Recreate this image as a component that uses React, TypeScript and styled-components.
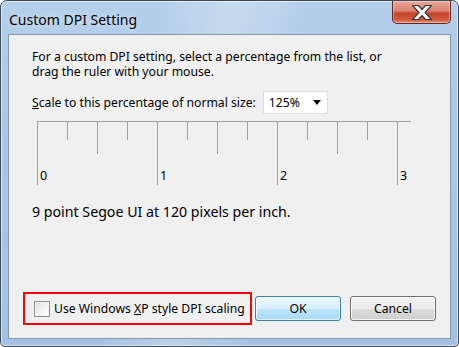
import styled, { createGlobalStyle } from 'styled-components';

const Global = createGlobalStyle`
  html, body {
    margin: 0;
    padding: 0;
    background: #ffffff;
  }
  body {
    font-family: "Noto Sans", "Open Sans", sans-serif;
  }
`;

const ticks = Array.from({ length: 13 }, (_, i) => i);

const Ruler = () => {
  return (
    <Styled.RulerSvg width="376" height="66" viewBox="0 0 376 66">
      <line x1="0" y1="1.5" x2="374" y2="1.5" stroke="#a0a0a0" strokeWidth="1" />
      {ticks.map((i) => {
        const x = i * 30 + 0.5;
        const len = i % 4 === 0 ? 64 : i % 2 === 0 ? 33 : 19;
        return <line key={i} x1={x} y1="1" x2={x} y2={1 + len} stroke="#a0a0a0" strokeWidth="1" />;
      })}
      {[0, 1, 2, 3].map((n) => (
        <text key={n} x={n * 120 + 3} y="60" fontSize="12.5" fill="#000" fontFamily='"Noto Sans", sans-serif'>
          {n}
        </text>
      ))}
    </Styled.RulerSvg>
  );
};

const App = () => {
  return (
    <>
      <Global />
      <Styled.Window>
        <Styled.TitleBar>
          <Styled.Title>Custom DPI Setting</Styled.Title>
          <Styled.CloseButton>
            <svg width="24" height="17" viewBox="0 0 24 17">
              <path
                d="M2.5 1.5 L8.5 1.5 L12 5.5 L15.5 1.5 L21.5 1.5 L15 8.5 L21.5 15.5 L15.5 15.5 L12 11.5 L8.5 15.5 L2.5 15.5 L9 8.5 Z"
                fill="#ffffff"
                stroke="#3a3a3a"
                strokeWidth="1.2"
                strokeLinejoin="round"
              />
            </svg>
          </Styled.CloseButton>
        </Styled.TitleBar>
        <Styled.Client>
          <Styled.Intro>
            For a custom DPI setting, select a percentage from the list, or
            <br />
            drag the ruler with your mouse.
          </Styled.Intro>
          <Styled.ScaleRow>
            <span>
              <u>S</u>cale to this percentage of normal size:
            </span>
            <Styled.Combo>
              125%
              <Styled.Arrow />
            </Styled.Combo>
          </Styled.ScaleRow>
          <Ruler />
          <Styled.Info>9 point Segoe UI at 120 pixels per inch.</Styled.Info>
          <Styled.Footer>
            <Styled.Highlight>
              <Styled.Checkbox />
              <span>
                Use Windows <u>X</u>P style DPI scaling
              </span>
            </Styled.Highlight>
            <Styled.Button $primary>OK</Styled.Button>
            <Styled.Button>Cancel</Styled.Button>
          </Styled.Footer>
        </Styled.Client>
      </Styled.Window>
    </>
  );
};

export default App;

const Styled = {
  Window: styled.div`
    box-sizing: border-box;
    width: 459px;
    height: 347px;
    border: 1px solid #3e4a55;
    border-radius: 7px 7px 5px 5px;
    padding: 0 7px 7px 7px;
    display: flex;
    flex-direction: column;
    background:
      linear-gradient(100deg, rgba(255,255,255,0) 30%, rgba(255,255,255,0.25) 45%, rgba(255,255,255,0) 60%),
      linear-gradient(180deg, #b4cfea 0%, #a9c7e6 40%, #a3c2e3 100%);
    box-shadow: inset 0 0 0 1px rgba(255, 255, 255, 0.55);
  `,
  TitleBar: styled.div`
    height: 33px;
    display: flex;
    justify-content: space-between;
    align-items: flex-start;
  `,
  Title: styled.div`
    font-family: "Noto Sans", sans-serif;
    font-size: 14px;
    color: #000;
    padding: 9px 0 0 1px;
    line-height: 20px;
    text-shadow: 0 0 8px rgba(255, 255, 255, 0.9);
  `,
  CloseButton: styled.div`
    box-sizing: border-box;
    width: 59px;
    height: 23px;
    border: 1px solid #5d2a22;
    border-top: none;
    border-radius: 0 0 5px 5px;
    display: flex;
    align-items: center;
    justify-content: center;
    background: linear-gradient(180deg, #e9a99c 0%, #d9816f 45%, #c7452d 55%, #cf5a3f 85%, #e08c70 100%);
    box-shadow: inset 0 0 0 1px rgba(255, 255, 255, 0.35);
  `,
  Client: styled.div`
    flex: 1;
    box-sizing: border-box;
    border: 1px solid #8396aa;
    background: #f0f0f0;
    padding: 14px 0 0 23px;
    display: flex;
    flex-direction: column;
    font-size: 12.2px;
    color: #000;
  `,
  Intro: styled.p`
    margin: 0;
    line-height: 15px;
  `,
  ScaleRow: styled.div`
    margin-top: 12px;
    display: flex;
    align-items: center;
    gap: 7px;
    line-height: 15px;
  `,
  Combo: styled.div`
    box-sizing: border-box;
    width: 65px;
    height: 23px;
    border: 1px solid #dcdcdc;
    background: #fff;
    padding-left: 5px;
    display: flex;
    align-items: center;
    justify-content: space-between;
    padding-right: 6px;
  `,
  Arrow: styled.span`
    width: 0;
    height: 0;
    border-left: 4px solid transparent;
    border-right: 4px solid transparent;
    border-top: 5px solid #000;
  `,
  RulerSvg: styled.svg`
    display: block;
    margin: 6px 0 0 5px;
    overflow: visible;
  `,
  Info: styled.p`
    margin: 17px 0 0 0;
    font-size: 14.2px;
    line-height: 18px;
  `,
  Footer: styled.div`
    margin-top: auto;
    margin-bottom: 13px;
    margin-left: -9px;
    display: flex;
    align-items: center;
  `,
  Highlight: styled.div`
    box-sizing: border-box;
    width: 229px;
    height: 33px;
    border: 2px solid #ff0000;
    display: flex;
    align-items: center;
    padding-left: 9px;
    gap: 4px;
    margin-right: 3px;
  `,
  Checkbox: styled.span`
    box-sizing: border-box;
    width: 16px;
    height: 16px;
    border: 1px solid #8e8f8f;
    background: linear-gradient(135deg, #dcdcdc 0%, #f4f4f4 60%, #ffffff 100%);
    box-shadow: inset 0 0 0 1px #f4f4f4;
  `,
  Button: styled.button<{ $primary?: boolean }>`
    box-sizing: border-box;
    width: 86px;
    height: 25px;
    margin-left: ${(p) => (p.$primary ? '0' : '9px')};
    border-radius: 3px;
    font-family: "Noto Sans", sans-serif;
    font-size: 12.2px;
    color: #000;
    padding: 0;
    border: 1px solid ${(p) => (p.$primary ? '#3c7fb1' : '#707070')};
    background: ${(p) =>
      p.$primary
        ? 'linear-gradient(180deg, #eaf6fd 0%, #d9f0fc 50%, #bee6fd 51%, #a7d9f5 100%)'
        : 'linear-gradient(180deg, #f2f2f2 0%, #ebebeb 50%, #dddddd 51%, #cfcfcf 100%)'};
    box-shadow: inset 0 0 0 1px ${(p) => (p.$primary ? 'rgba(255,255,255,0.7)' : 'rgba(255,255,255,0.8)')};
  `,
};
